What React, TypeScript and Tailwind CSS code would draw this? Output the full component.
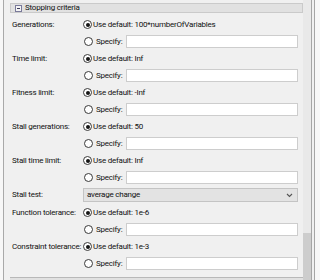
import React from "react";

type Row =
  | { kind: "default"; label: string; value: string }
  | { kind: "specify" }
  | { kind: "select"; label: string; value: string };

const rows: Row[] = [
  { kind: "default", label: "Generations:", value: "100*numberOfVariables" },
  { kind: "specify" },
  { kind: "default", label: "Time limit:", value: "Inf" },
  { kind: "specify" },
  { kind: "default", label: "Fitness limit:", value: "-Inf" },
  { kind: "specify" },
  { kind: "default", label: "Stall generations:", value: "50" },
  { kind: "specify" },
  { kind: "default", label: "Stall time limit:", value: "Inf" },
  { kind: "specify" },
  { kind: "select", label: "Stall test:", value: "average change" },
  { kind: "default", label: "Function tolerance:", value: "1e-6" },
  { kind: "specify" },
  { kind: "default", label: "Constraint tolerance:", value: "1e-3" },
  { kind: "specify" },
];

function Radio({ checked }: { checked: boolean }) {
  return (
    <span className="flex h-[9px] w-[9px] shrink-0 items-center justify-center rounded-full border border-[#3a3a3a] bg-white">
      {checked && <span className="h-[4px] w-[4px] rounded-full bg-[#151515]" />}
    </span>
  );
}

function MinusBox() {
  return (
    <span className="flex h-[7px] w-[7px] shrink-0 items-center justify-center border border-[#7a7a9a] bg-[#f4f4f4]">
      <span className="h-[1px] w-[3px] bg-[#3a3a5a]" />
    </span>
  );
}

export default function App() {
  return (
    <div className="flex h-[280px] w-[320px] overflow-hidden bg-[#f0f0f0] font-['Roboto',sans-serif] text-[8px] leading-none tracking-[-0.22px] text-[#111111]">
      <div className="w-[3px] shrink-0 bg-[#f7f7f7]" />
      <div className="w-[1px] shrink-0 bg-[#a9a9a9]" />
      <div className="flex w-[299px] shrink-0 flex-col pl-[6px] pt-[3px]">
        <div className="flex h-[10px] w-[293px] shrink-0 items-center gap-[3px] border border-[#cacaca] bg-[#e1e1e1] pl-[4px]">
          <MinusBox />
          <span>Stopping criteria</span>
        </div>
        <div className="mt-[5px] flex flex-col gap-[4px] pl-[2px]">
          {rows.map((r, i) => {
            if (r.kind === "default") {
              return (
                <div key={i} className="flex h-[13px] shrink-0 items-center">
                  <span className="w-[71px] shrink-0 whitespace-nowrap">{r.label}</span>
                  <Radio checked />
                  <span className="ml-[1px] whitespace-nowrap">Use default: {r.value}</span>
                </div>
              );
            }
            if (r.kind === "select") {
              return (
                <div key={i} className="flex h-[14px] shrink-0 items-center">
                  <span className="w-[71px] shrink-0 whitespace-nowrap">{r.label}</span>
                  <div className="flex h-[14px] w-[215px] items-center justify-between border border-[#c4c4c4] bg-[#e3e3e3] pl-[3px] pr-[4px]">
                    <span>{r.value}</span>
                    <svg width="7" height="5" viewBox="0 0 7 5">
                      <path d="M1 1 L3.5 3.5 L6 1" fill="none" stroke="#555" strokeWidth="1.1" />
                    </svg>
                  </div>
                </div>
              );
            }
            return (
              <div key={i} className="flex h-[13px] shrink-0 items-center">
                <span className="w-[71px] shrink-0" />
                <div className="flex w-[43px] shrink-0 items-center pl-[1px]">
                  <Radio checked={false} />
                  <span className="ml-[3px]">Specify:</span>
                </div>
                <div className="h-[13px] w-[172px] border border-[#cdcdcd] bg-white" />
              </div>
            );
          })}
        </div>
        <div className="mt-[7px] flex h-[12px] w-[293px] shrink-0 items-start gap-[3px] border-t border-[#b8b8b8] bg-[#e1e1e1] pl-[5px] pt-[2px]">
          <MinusBox />
          <span>Plot functions</span>
        </div>
      </div>
      <div className="flex w-[8px] shrink-0 flex-col bg-[#e9e9e9]">
        <div className="h-[233px] shrink-0" />
        <div className="flex-1 bg-[#cdcdcd]" />
      </div>
      <div className="w-[1px] shrink-0 bg-[#a5a5a5]" />
      <div className="w-[2px] shrink-0 bg-[#f0f0f0]" />
      <div className="w-[1px] shrink-0 bg-[#a5a5a5]" />
      <div className="flex-1 bg-[#f7f7f7]" />
    </div>
  );
}
